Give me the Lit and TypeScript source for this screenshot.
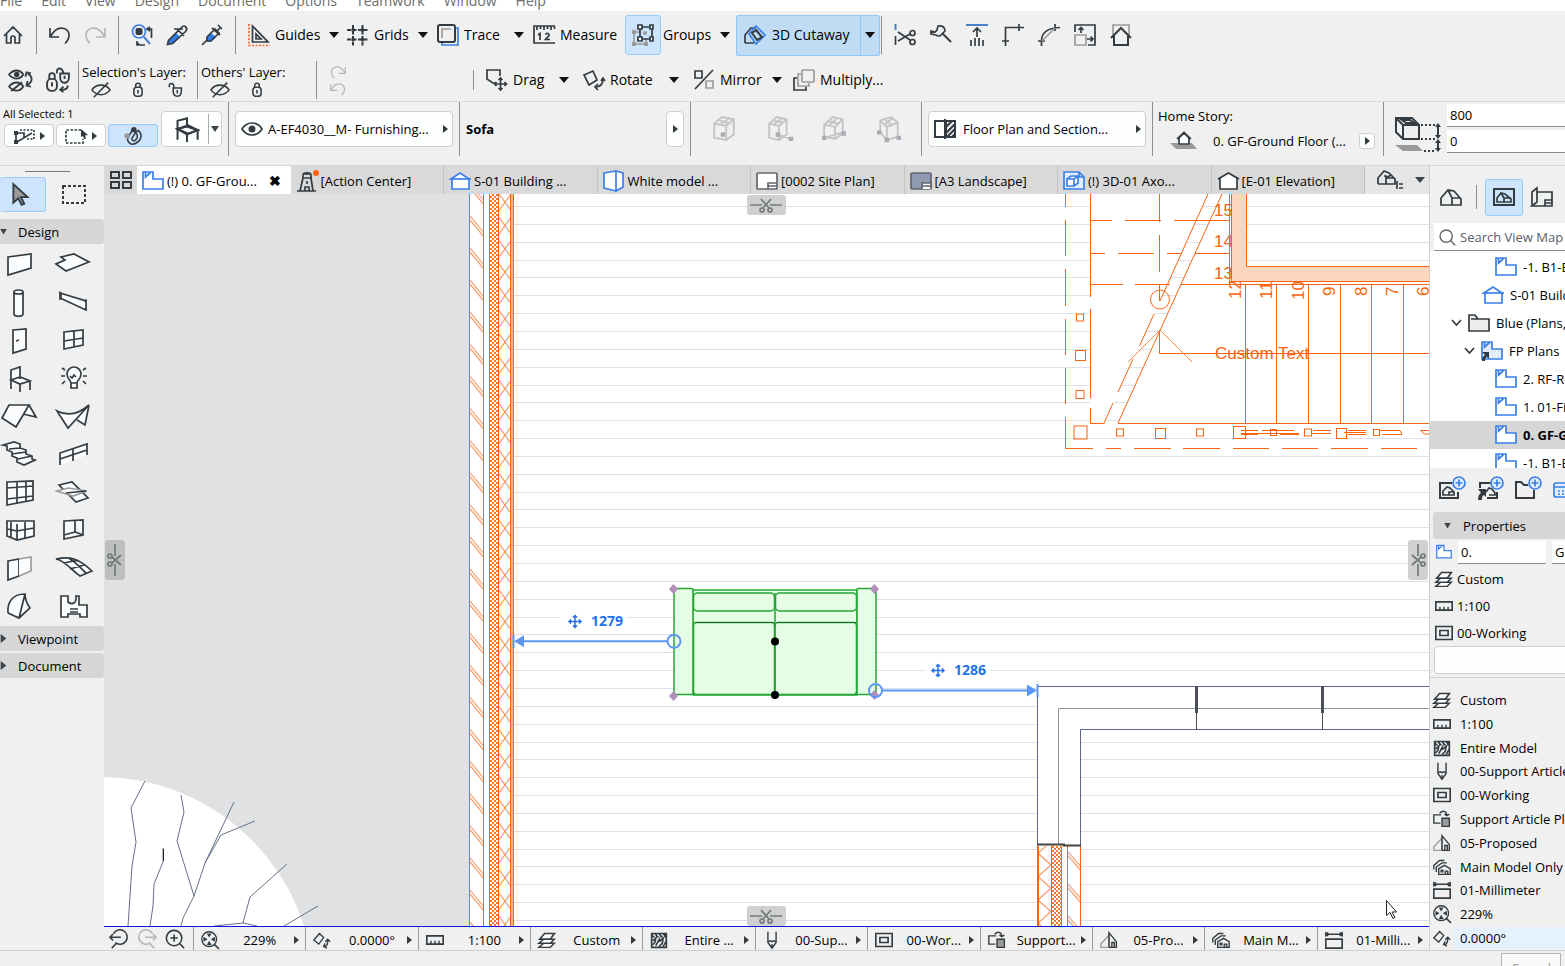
import { LitElement, html, svg, css } from "lit";
import { customElement, state } from "lit/decorators.js";
import { classMap } from "lit/directives/class-map.js";

/* Icon glyphs, drawn on a 22 x 22 grid unless a size is given. */
const icons: Record<string, unknown> = {
  home: svg`<path d="M2 12 11 3l9 9M4.500 10v9h4.500v-5a2 2 0 0 1 4 0v5h4.500v-9"/>`,
  undo: svg`<path d="M1 4v9h9M1.500 12.500C5 6 10 3 15 4.500c6 2 7 9 1 15"/>`,
  undoPale: svg`<path class="lt" d="M1 4v9h9M1.500 12.500C5 6 10 3 15 4.500c6 2 7 9 1 15"/>`,
  redo: svg`<path class="lt" d="M21 4v9h-9M20.500 12.500C17 6 12 3 7 4.500c-6 2-7 9-1 15"/>`,
  find: svg`<circle class="b" cx="8" cy="7.500" r="6.500"/><path class="b2" d="m13 13 6 7"/><rect class="f" x="4.500" y="4" width="7" height="7" rx="2"/><path d="M20.500 14V5H16m3-2-3 2 3 2M6 17v4h8m-6-2-2 2"/>`,
  pick: svg`<path class="bf" d="m2 20 1-4 7-7 4 4-7 7z"/><path d="m1.500 20.500 1-4 13-13c3-4 7 1 4 4l-13 12zM11 5l7 7M8 5l9 0"/>`,
  inject: svg`<path class="bf" d="m5 17 1-4 4-4 5 4-4 4-4 1z"/><path d="m1 21 5-5 0-3 8-8 4 4-8 8-4 0M16 7l4-4M17 1l4 4M11 4l8 7"/>`,
  guides: svg`<path class="o" stroke-dasharray="2 1.500" d="M1 0v21.500H22"/><path d="M4.500 2v16H20zM8 10v5h5z"/>`,
  grids: svg`<path class="w2" stroke-dasharray="4 1.500" d="M6 1v21M15.500 1v21M0 6h22M0 15.500h22"/><path class="f" d="M4.500 4.500h3v3h-3zM14 4.500h3v3h-3zM4.500 14h3v3h-3zM14 14h3v3h-3z"/>`,
  trace: svg`<path class="b" d="M18 4h3v17H5v-3"/><rect class="w2" x="1" y="1" width="17" height="17" rx="2"/><path class="g" d="M5 14V5h9"/>`,
  measure: svg`<path d="M22 2H1v17h21M4 2v4M7.500 2v3M11 2v4M14.500 2v3M18 2v4M21.500 2v3"/><path d="m5 11 2-1.500V16M12.500 10.500c1-2 4-1 3.500 1L12.500 15.500H17"/>`,
  groups: svg`<path class="g" d="M2 8v12h12v-5M8 8H2"/><path class="gf" d="M0 6h4v4H0zM0 18h4v4H0zM12 18h4v4h-4z"/><circle class="gf" cx="13" cy="9" r="2"/><path d="M8 3h12v12H8z"/><path class="wf" d="M6 1h4v4H6zM18 1h3v4h-3zM18 13h3v4h-3zM6 13h4v4H6z"/>`,
  cutaway: svg`<path d="M1 19V11l6-7h5M1 19h9"/><path class="b" d="m12 2 9 9-9 9-7-10z"/><path class="w2" d="m12 6 6 7-5 3-5-7z"/>`,
  trim: svg`<path class="b2" d="M1.500 0v6"/><path d="M1.500 12v9M4 8l12 8M4 17l12-7"/><circle cx="18.500" cy="9" r="2.500"/><circle cx="18.500" cy="18" r="2.500"/>`,
  adjust: svg`<path d="M8 2c5-1 7 2 7 5l-5 5c-3 0-4-1-4-1l-5-1V7l4 1 2-2z"/><path class="w2" d="m12 9 9 9"/>`,
  elevate: svg`<path class="b2" d="M0 1h22"/><path d="M11 13V4M7 8l4-4 4 4M5 16v6M9 14v8M13 14v8M17 16v6"/>`,
  corner: svg`<path d="M0 17h7M3.500 22V3.500H22M17 0v7"/>`,
  fillet: svg`<path d="M0 17h7M3.500 22V17C3.500 9 9 4 22 3.500M17 0v7"/><path class="g" d="M4 17 17 4"/>`,
  resize: svg`<path d="M1 8V1h20v20h-7"/><path class="g" d="M1 11h11v10H1z"/><path d="M7 9V4M4.500 6 7 3.500 9.500 6M13 15h6m-2.500-2.500L19 15l-2.500 2.500"/>`,
  roofs: svg`<path class="g" d="M3 12V1h16v11"/><path class="w2" d="m1 14 10-10 10 10M4 12v9h14v-9"/>`,
  eyeSwap: svg`<path d="M1 6c4-5 10-5 13 0-3 5-9 5-13 0zM1 17c4-5 10-5 13 0-3 5-9 5-13 0zM3 21 13 13M18 5c5 3 5 8-1 11m-1-8 1-4 4 1m0 12-4-1 1-4"/><circle class="f" cx="8" cy="6" r="2.500"/>`,
  lockSwap: svg`<rect x="1" y="10" width="9" height="11" rx="4"/><path d="M3 10V7c0-3 5-3 5 0v3M5.500 13v4M13 5h8v4c0 6-8 6-8 0zM10 5c-1-6 5-6 6 0M17 7v3M20 16c0 3-3 4-6 4m2-3-3 3 3 2"/>`,
  eyeOff: svg`<path d="M1 12c5-7 15-7 20 0-5 7-15 7-20 0zM3 20 19 4"/>`,
  lock: svg`<rect x="6.500" y="9" width="9" height="10" rx="3"/><path d="M8.500 9V7c0-3 5-3 5 0v2M11 12v4"/>`,
  unlock: svg`<path d="M9 10h9v3c0 8-9 8-9 0zM5 9c-2-5 5-6 5 1M13.500 12v4"/>`,
  drag: svg`<path d="M10 14H7L1 10V1h13v6"/><path d="M14.500 9v12M8.500 15h12M12.500 11l2-2 2 2M12.500 19l2 2 2-2M10.500 13l-2 2 2 2M18.500 13l2 2-2 2"/>`,
  rotate: svg`<path d="m1 6 9-4 4 9-8 5zM20 10c0 6-4 8-8 8m3-3-3 3 3 3M18 12l2-3 2 3"/>`,
  mirror: svg`<path d="M2 2h7v7H2zM2 20 20 1"/><path class="g" d="M13 12h7v7h-7z"/>`,
  multiply: svg`<path d="M4 9H1v12h12v-3"/><path class="g" d="M8 5H5v12h11v-3"/><rect class="g" x="9" y="1" width="12" height="12" rx="1"/>`,
  selDots: svg`<path stroke-dasharray="2 1.500" d="M7 5h14v9h-7"/><path d="M3 8v9h1L19 8M3 8h8v4"/><path class="f" d="M1 6h4v4H1zM1 15h4v4H1z"/>`,
  selRect: svg`<path stroke-dasharray="2.500 1.500" d="M16 5H1v13h17v-4"/><path class="f" d="m16 4 7 6-3 .5 1 3-2 .5-1-3-2 1z"/>`,
  magnet: svg`<path d="M6 12c-3 5 3 10 8 7 6-3 8-9 3-14l-3 2c3 3 2 7-1 9-2 1-4-1-3-3l4-6-4-2z"/><circle class="f" cx="12" cy="4" r="3"/><circle class="gf" cx="4.500" cy="11" r="3"/>`,
  chair: svg`<path class="pf" d="M3 11 12 8l8 4-8 3z"/><path d="M3 20V4l8-2v7M3 11l8-2 9 3-9 3.500zM11 15v7M20 12v8"/>`,
  eye: svg`<path d="M1 11c5-8 15-8 20 0-5 8-15 8-20 0z"/><circle class="f" cx="11" cy="11" r="3.500"/>`,
  cubeA: svg`<path d="M2 7 9 1l11 2v14l-7 5-11-2zM2 7l11 2v13M13 9l7-6M7 4l9 3M8 7l7-4"/><rect class="cf" x="8" y="15" width="4" height="4"/>`,
  cubeB: svg`<path d="M2 7 9 1l9 2v14l-7 5-9-2zM2 7l9 2v13M11 9l7-6M6 4l9 2M7 7l6-4M10 17l12 4"/><path class="cf" d="M8 15h4v4H8zM20 19h4v4h-4z"/>`,
  cubeC: svg`<path d="M2 8 10 1l9 2v13l-7 5-10-2zM2 8l10 2v11M12 10l7-7M6 5l9 2M7 8l6-5M2 20l17-5"/><path class="cf" d="M0 18h4v4H0zM18 14h4v4h-4z"/>`,
  cubeD: svg`<path d="M3 4 13 1l6 5v13l-10 3-6-7zM3 4l6 6v12M9 10l10-4M7 3l7 6M7 8l7-6"/><path class="cf" d="M0 13h4v4H0zM7 20h4v4H7zM18 18h4v4h-4z"/>`,
  section: svg`<path class="w2" d="M11 3H1v16h10"/><path class="gl w2" d="M12 3h9v16h-9z"/><path class="w2" d="M11 1v20M12 9l6-6M12 15l9-9M13 19l8-8M18 19l3-3"/>`,
  story: svg`<path class="gf" d="M0 12h22l5 6H6z"/><path class="wf" d="M9 13V7l5-5 5 5v6zM7 8l7-6.500L21 8"/>`,
  size3d: svg`<path class="gf" d="M0 28h22l6 6H8z"/><path class="w2" d="M1 1h16l7 7v14H8L1 15zM1 1l7 7h16M8 8v14M7 3h8l4 3h-8z"/><path class="w2" stroke-dasharray="2 2" d="M26 8h14M26 22h14M29 34h12"/><path class="w2" d="M43 8v12M43 23v10"/><path class="f" d="m43 6 3 4h-6zM43 22l3-4h-6zM43 22l3 4h-6zM43 35l3-4h-6z"/>`,
  tiles: svg`<path class="w2" d="M1 3h8v6H1zM13 3h8v6h-8zM1 13h8v6H1zM13 13h8v6h-8z"/>`,
  plan: svg`<path class="bl" d="M1 2h10v7h10v10H1z"/><path class="b" d="M3.500 2v5l4.500-4V2"/>`,
  planCut: svg`<path class="bl2" d="M1 2h10v7h10v10H1z"/><path class="b" d="M3.500 2v5l4.500-4V2"/><path class="f" d="M1 12h7v7l-2-2c-2 1-2 2-2 4H1c0-3 1-5 3-6z"/>`,
  tower: svg`<path d="M6 8h10M7 8V5c0-3 8-3 8 0v3M7 8 4 21h13L15 8M1 21h19M11 11v3M9 21v-4h4v4M7 4h8"/><circle class="of" cx="20" cy="3" r="3"/>`,
  house: svg`<path class="bl" d="M3 9v10h17V9l-9-6-9 6z"/><path class="b" d="M1 9h21"/>`,
  model: svg`<path class="bl" d="M1 3 13 1v20l-12-3zM13 1l7 2v14l-7 4z"/>`,
  layout: svg`<rect class="wf g2" x="1" y="3" width="20" height="16" rx="1"/><path class="g2" d="M12 19v-6h9M12 16h9"/>`,
  master: svg`<rect class="mf g2" x="1" y="3" width="20" height="16" rx="1"/><path class="wf g2" d="M12 19v-6h9v6M12 16h9"/>`,
  axo: svg`<path class="bl2" d="M1 2h15l5 5v12H1zM16 2v5h5"/><path class="bl" d="M4 9l4-3h7v7l-4 3H4zM4 9h7v7M11 9l4-3"/>`,
  elev: svg`<path class="wf" d="M3 8v11h17V8l-8.500-5L1 9M11.500 3 22 9"/>`,
  houseList: svg`<path d="M1 15V9l6-7 5 2 6 6v5H9v-8H7M1 15h8M9 9l5-3M9 9h9"/><path d="M20 12v8M22 15h4M22 19h4"/>`,
  house3d: svg`<path d="M1 19v-7l7-8 6 1 7 8v6zM12 19v-7L8 4M12 12h9"/>`,
  houseBox: svg`<rect class="w2" x="1" y="3" width="20" height="16"/><path d="M4 16v-4l4-5 4 1 6 5v3zM11 16v-4L8 7M11 12h7"/>`,
  layoutBook: svg`<path d="M1 19V6l5-4v14l-5 4h20V6H6M14 20v-6h7M14 17h7"/>`,
  search: svg`<circle class="g2" cx="10" cy="10" r="7.500"/><path class="g2" d="m15 15 6 6"/>`,
  folder: svg`<path class="gl" d="M1 19V3h6l3 4h11v12zM3 7h7"/>`,
  addView: svg`<path class="w2" d="M13 7H1v15h18v-6"/><path d="M4 19v-4l4-4 3 1 4 4v3zM10 19v-3h5"/><circle class="bl2" cx="20" cy="7" r="6"/><path class="b" d="M20 3.500v7M16.500 7h7"/>`,
  addClone: svg`<path class="w2" d="M14 7H3v5M10 22h10v-6"/><path d="M9 16l3-4 3 1 3 4v2h-6"/><path class="f" d="M1 13h8v8l-2-2c-2 1-2 2-2 5H1c0-4 1-6 3-7z"/><circle class="bl2" cx="20" cy="7" r="6"/><path class="b" d="M20 3.500v7M16.500 7h7"/>`,
  addFolder: svg`<path class="w2" d="M13 9h-4L6 6H1v16h18v-8"/><circle class="bl2" cx="20" cy="7" r="6"/><path class="b" d="M20 3.500v7M16.500 7h7"/>`,
  viewSet: svg`<rect class="bl2" x="1" y="7" width="20" height="14" rx="2"/><path class="b" d="M1 11h20M5 15h2M9 15h2M5 18h2M9 18h2"/>`,
  layers: svg`<path class="wf" d="m1 20 6-5h13l-5 5zM1 15l6-5h13l-5 5z"/><path class="wf w2" d="m2 10 6-7h12l-5 7z"/>`,
  ruler: svg`<path class="w2" d="M1 6h20v10H1z"/><path d="M6 16v-4M11 16v-4M16 16v-4"/>`,
  cover: svg`<path class="w2" d="M2 3h18v17H2z"/><path class="f" d="M2 3h18v5H2z"/><path class="wl" d="m4 4 3 3M9 4l3 3M14 4l3 3"/><path class="w2" d="M3 12l4-3-1 5-3 3M7 18l5-9M11 13l5-4-1 6-4 4M16 19l4-7"/>`,
  pen: svg`<path d="M6 1v13l5 7 5-7V1M6 13l3-1 2 1 2-1 3 1M11 16v4"/>`,
  frame: svg`<path class="w2" d="M1 3h20v16H1z"/><path class="w2" d="M6 8h10v6H6z"/>`,
  override: svg`<path d="M9 16H1V6h9M8 4c4-4 8-3 9 2m-3-1 3 2 3-2"/><path class="gf dk" d="M11 10h9v10h-9z"/>`,
  reno: svg`<path class="g" d="M1 20v-4L11 5v15z"/><path d="M11 20V2l9 11v7h-9M14.500 20v-6h3v6M9 11"/>`,
  filter: svg`<path d="M1 14V9l7-6 6 0M4 17v-6l7-5h6M7 20v-7l7-4 7 4v7zM15 20v-4h3v4M10 15h2v2h-2z"/>`,
  dims: svg`<path class="w2" d="M1 10h20v11H1z"/><path d="M1 4h20M1 1v6M21 1v6M4 2 1 4l3 2M18 2l3 2-3 2"/>`,
  fit: svg`<circle cx="10" cy="10" r="9"/><path class="w2" d="m16 16 6 6"/><path class="f" d="M7 3h6l-3 5zM7 17h6l-3-5zM3 7v6l5-3zM17 7v6l-5-3z"/>`,
  angle: svg`<path d="m1 11 7-8 5 5-6 8zM13 19c5 0 5-4 5-9m-3 3 3-3 3 3M15 15l-2 4 4 2"/>`,
  zoomPrev: svg`<path d="M5 5a8 8 0 1 1 2 10M8 16l-5 5M13 9H1m3.500-3.500L1 9l3.500 3.500"/>`,
  zoomNext: svg`<path class="lt" d="M17 5a8 8 0 1 0-2 10M14 16l5 5M9 9h12m-3.500-3.500L21 9l-3.500 3.500"/>`,
  zoomIn: svg`<circle cx="10" cy="10" r="8.500"/><path d="m16 16 5 5M6 10h8M10 6v8"/>`,
  arrow: svg`<path class="gf dk" d="M4 1v17l4.500-4 3 6 2.500-1-3-6H17z"/>`,
  marquee: svg`<path stroke-dasharray="3 2" class="w2" d="M1 1h22v17H1z"/>`,
};

/* Toolbox glyphs, drawn on a 34 x 28 grid. */
const tools: [string, unknown][] = [
  ["Wall", svg`<path d="M6 6 29 3v14L6 24z"/>`],
  ["Slab", svg`<path d="m5 6 13-3 15 8-23 9L0 13l9-4z"/>`],
  ["Column", svg`<path d="M12 3v22c0 3 9 3 9 0V3"/><ellipse cx="16.500" cy="3" rx="4.500" ry="2"/>`],
  ["Beam", svg`<path d="m4 4 26 8v9L4 9zM3 3l2 1v6l-2 0M28 12l3-1M28 20l3 1"/>`],
  ["Door", svg`<path d="m11 3 13-1v20l-13 4zM14 14l3-1"/>`],
  ["Window", svg`<path d="m8 5 19-2v15L8 22zM18 4v16M8 14l19-3"/>`],
  ["Object", svg`<path d="M9 24V5l9-3v12M9 15l9-3 10 4-10 3zM18 19v8M28 16v9"/>`],
  ["Lamp", svg`<path d="M15 18c0-3-4-4-4-9a6.500 6.500 0 0 1 14 0c0 5-4 6-4 9zM15 18v5h6v-5M14 11l2 2 2-3 2 2M6 3l3 2M5 11h4M6 19l3-3M30 3l-3 2M31 11h-4M30 19l-3-3"/>`],
  ["Roof", svg`<path d="M7 2h20l-13 22L0 15zM27 2l7 12-13-3"/>`],
  ["Shell", svg`<path d="M1 8c12 6 23 2 32-6L12 25zM33 2l-4 20-8-5"/>`],
  ["Stair", svg`<path d="m1 4 11-3 6 2v4l6 2v4l6 2v3l3 1-11 5-7-3v-4l-5-2v-4l-5-2V5zM7 8l11-1M10 13l14-2M16 18l14-3"/>`],
  ["Railing", svg`<path d="M4 24V12l27-9v11M4 18l27-9M17 8v12"/>`],
  ["Curtain Wall", svg`<path d="m5 3 26-1v19L5 26zM15 3v22M24 2v21M5 9l26-2M5 20l26-3"/>`],
  ["Skylight", svg`<path d="m3 6 13-3 16 16-12 4z"/><path class="g" d="M1 12 12 9l19 3-14 5z"/><path d="m10 14 20-2"/>`],
  ["Morph Grid", svg`<path d="M5 4h10l17 0v15l-17 4-10-4zM15 7v15M23 5v16M9 5v15M5 12l10 2 17-3"/>`],
  ["Zone", svg`<path d="m8 4 19-1v15L8 22zM19 4v11l8 3M19 15 8 18"/>`],
  ["Opening", svg`<path d="m6 6 11-2v17L6 25z"/><path class="g" d="m17 4 12-2v14l-12 5"/>`],
  ["Mesh", svg`<path d="M0 4c14-3 22-1 36 12l-12 5C15 15 10 6 0 4zM12 3c6 2 10 8 18 15M8 8l14-3M14 14l14-4"/>`],
  ["Vault", svg`<path d="M6 20C5 10 10 1 23 1l-6 24-11-5M23 1c0 5 2 10 5 14l-11 10"/>`],
  ["Fixture", svg`<path d="M5 3h7v6c5 4 9 0 8-6h3v9h8v12h-7v-3H12v3H5zM14 16h8M14 19h8"/>`],
];

const tabs = [
  ["plan", "(!) 0. GF-Grou..."],
  ["tower", "[Action Center]"],
  ["house", "S-01 Building ..."],
  ["model", "White model ..."],
  ["layout", "[0002 Site Plan]"],
  ["master", "[A3 Landscape]"],
  ["axo", "(!) 3D-01 Axo..."],
  ["elev", "[E-01 Elevation]"],
];

const quick = [
  ["fit", "229%"],
  ["angle", "0.0000°"],
  ["ruler", "1:100"],
  ["layers", "Custom"],
  ["cover", "Entire ..."],
  ["pen", "00-Sup..."],
  ["frame", "00-Wor..."],
  ["override", "Support..."],
  ["reno", "05-Pro..."],
  ["filter", "Main M..."],
  ["dims", "01-Milli..."],
];

const viewOptions = [
  ["layers", "Custom"],
  ["ruler", "1:100"],
  ["cover", "Entire Model"],
  ["pen", "00-Support Article"],
  ["frame", "00-Working"],
  ["override", "Support Article Plan"],
  ["reno", "05-Proposed"],
  ["filter", "Main Model Only"],
  ["dims", "01-Millimeter"],
  ["fit", "229%"],
  ["angle", "0.0000°"],
];

const tree: { level: number; icon: string; name: string; open?: boolean }[] = [
  { level: 3, icon: "plan", name: "-1. B1-Base" },
  { level: 2, icon: "house", name: "S-01 Building" },
  { level: 1, icon: "folder", name: "Blue (Plans, S", open: true },
  { level: 2, icon: "planCut", name: "FP Plans", open: true },
  { level: 3, icon: "plan", name: "2. RF-Roof" },
  { level: 3, icon: "plan", name: "1. 01-First" },
  { level: 3, icon: "plan", name: "0. GF-Ground" },
  { level: 3, icon: "plan", name: "-1. B1-Base" },
];

const range = (n: number) => Array.from({ length: n }, (_, i) => i);

@customElement("app-root")
export class AppRoot extends LitElement {
  @state() private tab = 0;
  @state() private node = 6;

  static styles = css`
    :host { display: block; height: 100vh; overflow: hidden; font: 13px/18px "Open Sans", "Noto Sans", sans-serif; color: #000; background: #f0f0f0; }
    * { box-sizing: border-box; }
    button { font: inherit; color: inherit; background: none; border: 0; padding: 0; margin: 0; display: flex; align-items: center; white-space: nowrap; text-align: left; }
    input { font: inherit; color: inherit; border: 0; border-bottom: 1px solid #8b8b8b; background: #fff; padding: 0 3px; min-width: 0; height: 23px; border-radius: 0; outline: 0; }
    svg { display: block; flex: none; }
    .ic { fill: none; stroke: #333c42; stroke-width: 1.700; overflow: visible; }
    .w2 { stroke-width: 2; }
    .lt { stroke: #b4b6b8; }
    .g { stroke: #9c9c9c; }
    .g2 { stroke: #62676f; }
    .b { stroke: #3a80e8; }
    .b2 { stroke: #4a7fc8; stroke-width: 2; }
    .o { stroke: #f26a21; }
    .f { fill: #333c42; stroke: none; }
    .gf { fill: #9a9a9a; stroke: none; }
    .dk { stroke: #333c42; }
    .cf { fill: #a8abb4; stroke: none; }
    .bf { fill: #2f7bea; stroke: none; }
    .of { fill: #ff640a; stroke: none; }
    .pf, .wf { fill: #fff; }
    .gl { fill: #eee; }
    .mf { fill: #8f9ab0; }
    .wl { stroke: #f0f0f0; }
    .bl { fill: #fff; stroke: #3a80e8; }
    .bl2 { fill: #e2eefc; stroke: #3a80e8; }
    .pale { stroke: #c4c4c4; }

    .app { display: flex; flex-direction: column; height: 100%; }
    .menu { height: 11px; flex: none; background: #fff; overflow: hidden; display: flex; gap: 19px; align-items: flex-end; color: #6c6c6c; font-size: 14px; line-height: 20px; }
    .menu button { line-height: 20px; }
    .bar { flex: none; display: flex; align-items: center; font-size: 14px; }
    .bar1 { height: 48px; }
    .bar2 { height: 42px; }
    .grp { display: flex; align-items: center; gap: 13px; padding: 0 12px; }
    .first { padding-left: 2px; }
    .sep { width: 1px; height: 38px; background: #8e8e8e; flex: none; }
    .short { height: 20px; }
    .cmds { display: grid; grid-template-columns: 99px 90px 96px 92px 111px 144px; align-items: center; padding-left: 12px; padding-right: 1px; }
    .edits { display: grid; grid-template-columns: 97px 110px 100px 100px; align-items: center; padding-left: 12px; }
    .cmd { display: flex; align-items: center; justify-content: space-between; }
    .lbl { gap: 5px; }
    .drop { width: 28px; height: 22px; justify-content: center; }
    .drop::before { content: ""; border: 5px solid transparent; border-top: 6px solid #111; border-bottom: 0; }
    .edits .drop { width: 38px; }
    .hot, .box.hot { background: #cce4fc; border: 1px solid #99cdf6; border-radius: 3px; }
    .grpbtn { width: 36px; height: 40px; justify-content: center; }
    .cmd .near { width: 20px; }
    .left { justify-content: flex-start; gap: 2px; }
    .push { flex: 1; display: flex; justify-content: center; }
    .cut { height: 41px; background: #bfdcf4; border: 1px solid #92c8f4; border-radius: 2px; }
    .cut .lbl { padding-left: 7px; gap: 6px; }
    .cut .drop { width: 19px; height: 39px; border-left: 1px solid #92c8f4; }
    .swap { gap: 14px; padding: 0 8px; }
    .edge { gap: 14px; }
    .layer { width: 118px; padding: 2px 0 0 3px; font-size: 13px; line-height: 17px; }
    .layer div { display: flex; gap: 17px; padding-left: 9px; margin-top: -2px; }
    .steps { width: 156px; padding-left: 13px; display: flex; flex-direction: column; gap: 1px; }

    .info { flex: none; height: 64px; border-top: 1px solid #d6d6d6; display: flex; align-items: flex-start; }
    .cell { flex: 0 0 231px; height: 54px; border-right: 1px solid #8e8e8e; display: flex; align-items: flex-start; padding: 9px 6px 0; }
    .c1 { flex-basis: 229px; padding: 0 0 0 3px; gap: 3px; }
    .last { flex: 1 1 auto; border: 0; padding: 2px 0 0 11px; gap: 5px; }
    .last > svg { margin-top: 13px; }
    .sel { padding-top: 4px; font-size: 11px; line-height: 16px; }
    .sel div { display: flex; gap: 2px; padding: 2px 0 0 1px; }
    .box { background: #fdfefe; border: 1px solid #cfcfcf; border-radius: 4px; height: 36px; }
    .mini { width: 50px; height: 23px; gap: 5px; justify-content: center; }
    .go::after { content: ""; border: 4px solid transparent; border-left: 5px solid #333b40; border-right: 0; }
    .chair { width: 61px; margin-top: 9px; gap: 8px; padding-left: 12px; }
    .chair::after { content: ""; border: 4px solid transparent; border-top: 6px solid #3a4349; border-bottom: 0; margin-left: -6px; }
    .chair i { width: 1px; height: 30px; background: #aaa; }
    .wide { flex: 1; padding: 0 4px 0 5px; gap: 5px; }
    .wide span { flex: 1; }
    .plan { gap: 7px; }
    .go1 { width: 18px; justify-content: center; }
    .sofa { flex: 1; font-weight: 700; line-height: 36px; }
    .cubes { justify-content: space-between; padding: 14px 20px 0 21px; }
    .home { flex-direction: column; padding: 5px 5px 0; }
    .home div { display: flex; align-items: center; width: 100%; height: 34px; padding: 0 3px 0 12px; }
    .home span { flex: 1; padding-left: 15px; }
    .go2 { width: 16px; height: 16px; justify-content: center; border-radius: 3px; }
    .fields { flex: 1; display: grid; gap: 3px; }

    .main { flex: 1; display: flex; min-height: 0; border-top: 1px solid #d6d6d6; border-bottom: 1px solid #d0d0d0; }
    .box-tools { flex: 0 0 104px; overflow: hidden; }
    .grip { height: 11px; padding: 5px 34px 0 25px; }
    .grip hr { margin: 0; border: 0; height: 1px; background: #777; }
    .modes { display: flex; gap: 5px; height: 35px; align-items: center; }
    .modes button { width: 46px; height: 35px; justify-content: center; border-left: 0; }
    .modes .hot { padding-right: 4px; }
    .head { width: 100%; height: 25px; background: #d6d6d6; border-radius: 0 3px 3px 0; gap: 11px; margin-bottom: 2px; }
    .head::before { content: ""; width: 7px; height: 9px; background: #3a4349; clip-path: polygon(10% 0, 90% 50%, 10% 100%); }
    .down::before { height: 6px; clip-path: polygon(0 0, 100% 0, 50% 100%); }
    .modes + .head { margin-top: 7px; }
    .grid { display: grid; grid-template-columns: 54px 50px; grid-auto-rows: 38px; }
    .grid button { padding-left: 2px; }
    .grid .ic { fill: #fbfcfd; }

    .center { flex: 1; min-width: 0; display: flex; flex-direction: column; }
    .tabs { flex: none; height: 28px; display: flex; background: #e6e6e6; }
    .tiles { width: 33px; justify-content: center; background: #d9d9d9; }
    .tab { flex: 1; min-width: 0; overflow: hidden; background: #d9d9d9; border-right: 1px solid #c4c4c4; padding: 2px 0 0 5px; gap: 3px; }
    .on { background: #fff; border-color: #fff; }
    .on span { flex: 1; }
    .x { font-size: 14px; width: 21px; }
    .more { width: 64px; padding-left: 12px; justify-content: space-between; }
    .more::after { content: ""; border: 5px solid transparent; border-top: 6px solid #3a4349; border-bottom: 0; margin-right: 4px; }
    .canvas { flex: 1; min-height: 0; position: relative; overflow: hidden; background: #fff; border-bottom: 1px solid #1414e0; }
    .canvas > svg { width: 100%; height: 100%; }
    .snip { position: absolute; width: 39px; height: 20px; background: #cfd0d0; border-radius: 3px; justify-content: center; }
    .snip .ic { stroke: #75797b; }
    .top { top: 1px; left: calc(50% - 20px); }
    .bottom { bottom: 0; left: calc(50% - 20px); }
    .west, .east { width: 20px; height: 40px; top: calc(50% - 20px); }
    .west { left: 1px; background: #bdbfbf; }
    .east { right: 1px; }
    .west .ic { transform: rotate(90deg); }
    .east .ic { transform: rotate(-90deg); }
    .status { flex: none; height: 23px; display: flex; }
    .zooms { width: 89px; display: flex; justify-content: space-between; padding: 0 8px 0 5px; }
    .q { flex: 1; min-width: 0; border-left: 1px solid #9a9a9a; padding: 2px 6px 0 7px; gap: 4px; }
    .q span { flex: 1; min-width: 0; overflow: hidden; text-align: center; padding-left: 6px; }

    .nav { flex: 0 0 136px; overflow: hidden; border-left: 1px solid #d0d0d0; display: flex; flex-direction: column; }
    .modesnav { display: flex; align-items: center; flex: none; height: 57px; padding: 5px 0 0 10px; gap: 8px; }
    .modesnav .sep { height: 24px; margin: 0 0 0 6px; }
    .modesnav .hot { width: 38px; height: 37px; justify-content: center; }
    .find { flex: none; display: flex; align-items: center; height: 28px; margin-left: 4px; background: #fff; border-bottom: 1px solid #8b8b8b; padding-left: 4px; width: 180px; }
    .find input { border: 0; width: 150px; padding-left: 4px; }
    .find input::placeholder { color: #56606b; opacity: 1; }
    .tree { flex: 0 0 217px; background: #fff; overflow: hidden; padding-top: 2px; width: 200px; }
    .row { height: 28px; width: 100%; gap: 6px; }
    .l1 { padding-left: 21px; }
    .l2 { padding-left: 34px; }
    .l3 { padding-left: 65px; }
    .shut { padding-left: 52px; }
    .cur { background: #d6d6d6; font-weight: 700; }
    .acts { flex: none; display: flex; align-items: flex-start; width: 200px; gap: 12px; padding: 8px 0 0 9px; height: 44px; }
    .nav .head { flex: none; height: 27px; width: 200px; margin: 0 0 0 3px; padding-left: 11px; gap: 12px; border-radius: 3px; }
    .idrow { flex: none; display: flex; align-items: center; gap: 6px; width: 210px; height: 26px; padding-left: 6px; }
    .idrow input { width: 90px; }
    .prop { flex: none; height: 27px; padding-left: 5px; gap: 4px; }
    .blank { flex: none; height: 28px; width: 200px; margin: 0 0 3px 4px; }
    .opts { flex: 1; min-height: 0; border-top: 1px solid #d0d0d0; padding-top: 10px; display: flex; flex-direction: column; width: 200px; }
    .opt { flex: 1; gap: 3px; padding-left: 3px; }
    .opt span { flex: 1; padding: 2px 6px; }
    .opt:last-child span { background: #e5f1fc; }
    .foot { flex: none; height: 15px; display: flex; justify-content: flex-end; padding: 2px 4px 0 0; overflow: hidden; }
    .foot button { width: 60px; height: 30px; flex: none; justify-content: center; border: 1px solid #b5b5b5; background: #fafafa; color: #999; }

    .grd { stroke: #dde0ec; }
    .or { stroke: #f8650e; fill: none; }
    .thin { stroke: #f68a4b; fill: none; }
    .ortext { fill: #f8650e; font: 17px "Liberation Sans", Arial, sans-serif; }
    .tag { fill: #2472e8; font: 700 14px "Open Sans", sans-serif; }
    .navy { stroke: #5b6590; fill: none; }
    .slate { stroke: #8c929c; fill: none; }
    .twig { stroke: #66708c; fill: none; }
    .so { fill: #e4fde4; stroke: #26a536; stroke-width: 1.500; }
    .bar-b { stroke: #5c96f4; stroke-width: 2; fill: none; }
    .tip { fill: #5c96f4; }
    .mv { stroke: #2472e8; stroke-width: 1.500; fill: none; }
    .dia { fill: #b18fb9; }
  `;

  private ic(name: string, w = 22, cls = "") {
    return html`<svg class="ic ${cls}" viewBox="0 0 22 22" width=${w} height=${w} aria-hidden="true">${icons[name]}</svg>`;
  }

  private cmd(icon: string, text: string, drop = true) {
    return html`<div class="cmd">
      <button class="lbl">${this.ic(icon)}${text}</button>
      ${drop ? html`<button class="drop" aria-label="${text} options"></button>` : ""}
    </div>`;
  }

  private iconButtons(names: string[], w = 22) {
    return names.map((n) => html`<button aria-label=${n}>${this.ic(n, w)}</button>`);
  }

  private snip(place: string) {
    return html`<button class="snip ${place}" aria-label="Cut ${place}">
      <svg class="ic" width="32" height="16" viewBox="0 0 32 16"><path d="M0 8h12M20 8h12M11 2l8 9M21 2l-8 9"/><circle cx="12" cy="13" r="2"/><circle cx="20" cy="13" r="2"/></svg>
    </button>`;
  }

  private drawing() {
    const line = (k: number) => Math.round(206 + k * 17.85) + 0.5;
    const sq = (x: number, y: number, s: number) => svg`<rect class="or" x=${x - s / 2} y=${y - s / 2} width=${s} height=${s} />`;
    const up = (x: number, y: number, t: string) => svg`<text class="ortext" transform="translate(${x} ${y}) rotate(-90)">${t}</text>`;
    return html`<svg viewBox="104 194 1325 732" preserveAspectRatio="xMinYMin slice" role="img" aria-label="Floor plan">
      <defs>
        <pattern id="brick" width="14" height="32.1" patternUnits="userSpaceOnUse" patternTransform="translate(470 569)"><path class="thin" d="M0 0l14 17M0 4l14 17"/></pattern>
        <pattern id="cross" width="12" height="23.3" patternUnits="userSpaceOnUse" patternTransform="translate(499 563.3)"><path class="thin" d="M0 3.500l12 16.500M12 3.500 0 20"/></pattern>
        <pattern id="dots" width="4" height="4" patternUnits="userSpaceOnUse" patternTransform="translate(490 194)"><path fill="#f8792f" d="M0 0h4v4H0z"/><path fill="#fff" d="M0 0h2v2H0zM2 2h2v2H2z"/></pattern>
        <pattern id="zig" width="13" height="23.3" patternUnits="userSpaceOnUse" patternTransform="translate(1038 853.3)"><path class="thin" d="M0 0l13 11.650L0 23.300"/></pattern>
        <pattern id="brick2" width="14" height="32.1" patternUnits="userSpaceOnUse" patternTransform="translate(1067 850.7)"><path class="thin" d="M0 0l14 16M0 4l14 16"/></pattern>
      </defs>
      <rect x="104" y="194" width="366" height="732" fill="#e0e1e3"/>
      ${range(41).map((k) => svg`<path class="grd" d="M514 ${line(k)}H1430"/>`)}

      <circle cx="100" cy="991" r="214" fill="#fff"/>
      <path class="twig" d="M145 781l-14 27 5 34-4 24-4 60M181 795l3 17-7 29 17 55 11-33 29-61M255 821l-34 14-16 28M163 848v14l-9 22-1 22-3 20M194 896l-11 22-2 8M287 864l-37 33-7 26-29 3M243 923l14 3M318 906l-34 20"/>
      <path stroke="#222" d="M163.500 849v12"/>

      <rect x="470" y="194" width="44" height="732" fill="#fff"/>
      <rect x="470" y="194" width="14" height="732" fill="url(#brick)"/>
      <rect x="490" y="194" width="9" height="732" fill="url(#dots)"/>
      <rect x="499" y="194" width="12" height="732" fill="url(#cross)"/>
      <rect x="511" y="194" width="3" height="732" fill="#ffb084"/>
      <path class="or" d="M469.500 194v732M483.500 194v732M489.500 194v732M498.500 194v732M510.500 194v732M513.500 194v732"/>

      <path fill="#fff" d="M1090 194h118l-104 229h-14zM1222 194h9v90h199v139h-312z"/>
      <path class="or" d="M1065.500 194v13M1065.500 220v36M1065.500 269v37M1065.500 319v36M1065.500 368v36M1065.500 417v31.500H1093M1106 448.500h15M1134 448.500h37M1183 448.500h37M1233 448.500h36M1282 448.500h36M1331 448.500h37M1381 448.500h36"/>
      <path class="or" d="M1090.500 194v103M1090.500 309v89M1090.500 408v15.500h14M1118 423.500h312M1091 220.500h21M1125 220.500h36M1174 220.500h56M1091 253.500h14M1118 253.500h36M1167 253.500h15M1195 253.500h35M1091 284.500h32M1135 284.500h35M1181 284.500h249"/>
      <path class="or" d="M1159.500 194v28M1159.500 235v37M1159.500 284v17M1159.500 330v23.500H1430"/>
      <circle class="or" cx="1160" cy="299.500" r="9.500"/>
      <path class="or" d="M1208 194l-48 107M1154 314l-14.500 32M1133 359l-15 33M1113 403l-9 20M1222 194l-104 229"/>
      <path class="thin" d="M1128 362l32-32 32 32"/>
      <path class="or" d="M1245.500 284v139M1276.500 284v139M1308.500 284v139M1340.500 284v139M1371.500 284v139M1403.500 284v139"/>
      <text class="ortext" x="1214" y="216">15</text>
      <text class="ortext" x="1214" y="247">14</text>
      <text class="ortext" x="1214" y="279">13</text>
      <path fill="#fdd6be" d="M1232 194h14v72h184v16h-198z"/>
      <path class="or" d="M1229.500 194v90M1231.500 194v87.500H1430M1246.500 194v72.500H1430"/>
      ${up(1241, 299, "12")}${up(1272, 299, "11")}${up(1304, 300, "10")}${up(1335, 296, "9")}${up(1367, 296, "8")}${up(1398, 296, "7")}${up(1429, 296, "6")}
      <text class="ortext" x="1215" y="359">Custom Text</text>
      ${sq(1080, 317.5, 7)}${sq(1080.5, 355.5, 10)}${sq(1080, 394.5, 8)}${sq(1080.5, 432.5, 13)}${sq(1120, 432.5, 7)}${sq(1160.5, 433.5, 10)}${sq(1200, 432.5, 7)}${sq(1239.5, 432.5, 12)}${sq(1273.5, 432.5, 6)}${sq(1308, 432.5, 7)}${sq(1341.5, 433.5, 10)}${sq(1376.5, 432.5, 6)}
      <path class="or" d="M1241 430.500h17M1262 430.500h32M1313 430.500h18M1348 430.500h18M1380 430.500h20l2 4h-20M1241 433.500h58M1311 433.500h20M1344 432.500h22M1420 430.500h10M1421 430l3 4h6M1241 434.500h17M1280 434.500h19M1348 434.500h18"/>

      <path fill="#fff" d="M1037 686h393v44h-349v196h-44z"/>
      <path class="navy" d="M1430 686.500h-392.500V845M1430 729.500h-349.500V845"/>
      <path class="slate" d="M1430 708.500h-371.500V845"/>
      <path d="M1195 686h3v27h-3zM1321 686h3v27h-3zM1196 713h1v17h-1zM1322 713h1v17h-1z" fill="#4a4f58"/>
      <rect x="1038" y="846" width="13" height="80" fill="url(#zig)"/>
      <rect x="1051" y="846" width="11" height="80" fill="url(#dots)"/>
      <rect x="1067" y="846" width="14" height="80" fill="url(#brick2)"/>
      <path class="or" d="M1037.500 846v80M1038.500 846v80M1051.500 846v80M1061.500 846v80M1067.500 846v80M1080.500 846v80"/>
      <path stroke="#444" stroke-width="2" d="M1037 844.500h28M1063 845.500h18"/>

      <path class="so" d="M693 590h164v105H693z"/>
      <rect class="so" x="674" y="588.500" width="19" height="106" rx="1"/>
      <rect class="so" x="857" y="588.500" width="19" height="106" rx="1"/>
      <rect class="so" x="693.500" y="593" width="81" height="18" rx="4"/>
      <rect class="so" x="775.500" y="593" width="81" height="18" rx="4"/>
      <rect class="so" x="693.500" y="622.500" width="81" height="72" rx="3"/>
      <rect class="so" x="775" y="622.500" width="81.500" height="72" rx="3"/>
      <path class="so" d="M775 593v102"/>
      <path stroke="#1e6a2c" d="M695 622.500h79M777 622.500h79"/>
      <path class="dia" d="M673.500 584l4.500 5-4.500 5-4.500-5zM874.500 584l4.500 5-4.500 5-4.500-5zM673.500 691l4.500 5-4.500 5-4.500-5zM874.500 690l4.500 5-4.500 5-4.500-5z"/>
      <circle cx="775" cy="641.500" r="4"/><circle cx="775" cy="695" r="4"/>
      <path class="bar-b" d="M523 641.300h144.500M882 690.500h146"/>
      <path class="tip" d="M514 641.300l10-6v12zM1037 690.500l-10-6v12z"/>
      <path class="bar-b" d="M513.500 635v13M1037.500 684v13"/>
      <circle class="bar-b" cx="674" cy="641.300" r="6.500"/><circle class="bar-b" cx="875.500" cy="690.500" r="6.500"/>
      <rect x="561" y="612" width="66" height="18" fill="#fff"/><rect x="925" y="661" width="66" height="18" fill="#fff"/>
      ${[[575, 621.5], [938, 670.5]].map(([x, y]) => svg`<path class="mv" transform="translate(${x} ${y})" d="M0-6V6M-6 0H6M-2-4l2-2 2 2M-2 4l2 2 2-2M-4-2l-2 2 2 2M4-2l2 2-2 2"/>`)}
      <text class="tag" x="591" y="626">1279</text>
      <text class="tag" x="954" y="675">1286</text>
      <path d="M1386.500 900.500v15l3.500-3 3 6 2-1-3-5.500h4.500z" fill="#fff" stroke="#222"/>
    </svg>`;
  }

  render() {
    return html`<div class="app">
      <nav class="menu">
        ${["File", "Edit", "View", "Design", "Document", "Options", "Teamwork", "Window", "Help"].map((m) => html`<button>${m}</button>`)}
      </nav>

      <div class="bar bar1">
        <div class="grp first">${this.iconButtons(["home"])}</div><i class="sep"></i>
        <div class="grp">${this.iconButtons(["undo", "redo"])}</div><i class="sep"></i>
        <div class="grp">${this.iconButtons(["find", "pick", "inject"])}</div><i class="sep"></i>
        <div class="cmds">
          ${this.cmd("guides", "Guides")}${this.cmd("grids", "Grids")}${this.cmd("trace", "Trace")}${this.cmd("measure", "Measure", false)}
          <div class="cmd left"><button class="hot grpbtn" aria-label="Suspend Groups">${this.ic("groups")}</button><button>Groups</button><span class="push"><button class="drop near" aria-label="Groups options"></button></span></div>
          <div class="cmd cut"><button class="lbl">${this.ic("cutaway")}3D Cutaway</button><button class="drop" aria-label="3D Cutaway options"></button></div>
        </div>
        <i class="sep"></i>
        <div class="grp edge">${this.iconButtons(["trim", "adjust", "elevate", "corner", "fillet", "resize", "roofs"])}</div>
      </div>

      <div class="bar bar2">
        <div class="grp swap">${this.iconButtons(["eyeSwap", "lockSwap"], 24)}</div><i class="sep"></i>
        <div class="layer">Selection's Layer:<div>${this.iconButtons(["eyeOff", "lock", "unlock"], 20)}</div></div><i class="sep"></i>
        <div class="layer">Others' Layer:<div>${this.iconButtons(["eyeOff", "lock"], 20)}</div></div><i class="sep"></i>
        <div class="steps">${this.iconButtons(["redo", "undoPale"], 16)}</div>
        <i class="sep short"></i>
        <div class="edits">${this.cmd("drag", "Drag")}${this.cmd("rotate", "Rotate")}${this.cmd("mirror", "Mirror")}${this.cmd("multiply", "Multiply...", false)}</div>
      </div>

      <div class="info">
        <div class="cell c1">
          <div class="sel">All Selected: 1
            <div>
              <button class="box mini go" aria-label="Selected elements">${this.ic("selDots")}</button>
              <button class="box mini go" aria-label="Selection mode">${this.ic("selRect")}</button>
              <button class="box mini hot" aria-label="Gravity">${this.ic("magnet", 20)}</button>
            </div>
          </div>
          <button class="box chair" aria-label="Object settings">${this.ic("chair", 26)}<i></i></button>
        </div>
        <div class="cell"><button class="box wide go">${this.ic("eye")}<span>A-EF4030__M- Furnishing...</span></button></div>
        <div class="cell"><span class="sofa">Sofa</span><button class="box go1 go" aria-label="Choose object"></button></div>
        <div class="cell cubes">${["cubeA", "cubeB", "cubeC", "cubeD"].map((n) => html`<button aria-label="Anchor point">${this.ic(n, 24, "pale")}</button>`)}</div>
        <div class="cell"><button class="box wide plan go">${this.ic("section")}<span>Floor Plan and Section...</span></button></div>
        <div class="cell home">Home Story:
          <div><svg class="ic" width="28" height="20" viewBox="0 0 28 20">${icons.story}</svg><span>0. GF-Ground Floor (...</span><button class="box go2 go" aria-label="Choose story"></button></div>
        </div>
        <div class="cell last">
          <svg class="ic" width="47" height="36" viewBox="0 0 47 36">${icons.size3d}</svg>
          <div class="fields"><input aria-label="Height" value="800"><input aria-label="Elevation" value="0"></div>
        </div>
      </div>

      <div class="main">
        <aside class="box-tools">
          <div class="grip"><hr></div>
          <div class="modes"><button class="hot" aria-label="Arrow">${this.ic("arrow", 24)}</button>
            <button aria-label="Marquee"><svg class="ic" width="24" height="19" viewBox="0 0 24 19">${icons.marquee}</svg></button></div>
          <button class="head down">Design</button>
          <div class="grid">${tools.map(([n, g]) => html`<button aria-label=${n}><svg class="ic" width="34" height="28" viewBox="0 0 34 28">${g}</svg></button>`)}</div>
          <button class="head">Viewpoint</button>
          <button class="head">Document</button>
        </aside>

        <section class="center">
          <div class="tabs">
            <button class="tiles" aria-label="Tab overview">${this.ic("tiles")}</button>
            ${tabs.map(([icon, name], i) => html`<button class=${classMap({ tab: true, on: i === this.tab })} @click=${() => (this.tab = i)}>${this.ic(icon)}<span>${name}</span>${i === this.tab ? html`<b class="x">✖</b>` : ""}</button>`)}
            <button class="more" aria-label="More tabs"><svg class="ic" width="27" height="22" viewBox="0 0 27 22">${icons.houseList}</svg></button>
          </div>
          <div class="canvas">${this.drawing()}${["top", "bottom", "west", "east"].map((p) => this.snip(p))}</div>
          <div class="status">
            <div class="zooms">${this.iconButtons(["zoomPrev", "zoomNext", "zoomIn"], 20)}</div>
            ${quick.map(([icon, text]) => html`<button class="q go">${this.ic(icon, 18)}<span>${text}</span></button>`)}
          </div>
        </section>

        <aside class="nav">
          <div class="modesnav">${this.iconButtons(["house3d"])}<i class="sep"></i><button class="hot" aria-label="View Map">${this.ic("houseBox")}</button>${this.iconButtons(["layoutBook"])}</div>
          <label class="find">${this.ic("search", 18)}<input type="text" aria-label="Search" placeholder="Search View Map"></label>
          <div class="tree">
            ${tree.map((r, i) => html`<button class=${classMap({ row: true, ["l" + r.level]: true, shut: r.level === 2 && !r.open, cur: i === this.node })} @click=${() => (this.node = i)}>
              ${r.open ? html`<svg class="ic" width="11" height="8" viewBox="0 0 11 8"><path d="m1 1 4.500 5L10 1"/></svg>` : ""}${this.ic(r.icon)}${r.name}</button>`)}
          </div>
          <div class="acts">${["addView", "addClone", "addFolder", "viewSet"].map((n) => html`<button aria-label=${n}><svg class="ic" width="26" height="24" viewBox="0 0 26 24">${icons[n]}</svg></button>`)}</div>
          <button class="head down">Properties</button>
          <div class="idrow">${this.ic("plan", 16)}<input aria-label="ID" value="0."><input aria-label="Name" value="GF-Ground Floor"></div>
          <button class="prop">${this.ic("layers", 18)}Custom</button>
          <button class="prop">${this.ic("ruler", 18)}1:100</button>
          <button class="prop">${this.ic("frame", 18)}00-Working</button>
          <button class="box blank" aria-label="View settings"></button>
          <div class="opts">${viewOptions.map(([icon, text]) => html`<button class="opt">${this.ic(icon, 18)}<span>${text}</span></button>`)}</div>
        </aside>
      </div>
      <footer class="foot"><button>Cancel</button></footer>
    </div>`;
  }
}
